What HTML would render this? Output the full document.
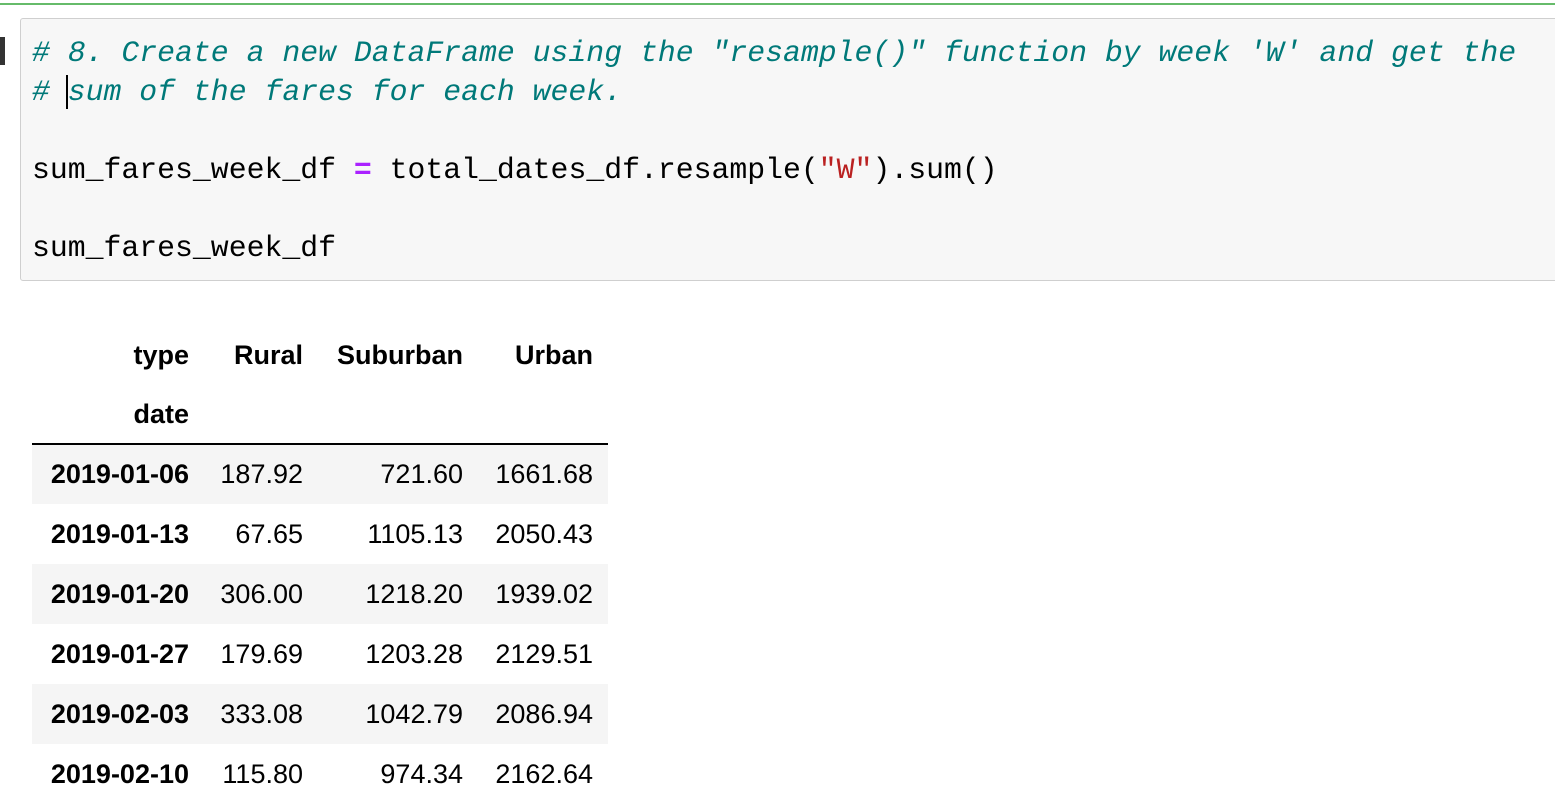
<!DOCTYPE html>
<html><head><style>
body{margin:0;width:1555px;height:798px;overflow:hidden;background:#fff;position:relative;font-family:"Liberation Sans",Arial,sans-serif}
.green{position:absolute;left:0;top:3px;width:1555px;height:2px;background:#66bb6a}
.mark{position:absolute;left:0;top:37px;width:5px;height:28px;background:#333}
.cell{position:absolute;left:20px;top:18px;width:1545px;height:261px;background:#f7f7f7;border:1px solid #cfcfcf;border-radius:3px}
.code{position:absolute;left:32px;top:34px;font-family:"Liberation Mono",monospace;font-size:29.8px;letter-spacing:0;line-height:39px;white-space:pre;color:#000}
.c{color:#007979;font-style:italic}
.o{color:#aa22ff;font-weight:bold}
.s{color:#ba2121}
.cur{position:absolute;left:66px;top:75px;width:2px;height:34px;background:#000}
table{position:absolute;left:32px;top:325px;border-collapse:collapse;font-size:27px;color:#000;table-layout:fixed;width:576px}
td,th{height:60px;padding:0 15px 0 0;text-align:right;white-space:nowrap;box-sizing:border-box}
th{font-weight:bold}
thead tr:last-child th{border-bottom:2px solid #000;height:59px}
tbody tr:nth-child(odd){background:#f5f5f5}
</style></head><body>
<div class="green"></div>
<div class="mark"></div>
<div class="cell"></div>
<div class="code"><span class="c"># 8. Create a new DataFrame using the "resample()" function by week 'W' and get the
# sum of the fares for each week.</span>

sum_fares_week_df <span class="o">=</span> total_dates_df.resample(<span class="s">"W"</span>).sum()

sum_fares_week_df</div>
<div class="cur"></div>
<table>
<colgroup><col style="width:172px"><col style="width:114px"><col style="width:160px"><col style="width:130px"></colgroup>
<thead>
<tr><th>type</th><th>Rural</th><th>Suburban</th><th>Urban</th></tr>
<tr><th>date</th><th></th><th></th><th></th></tr>
</thead>
<tbody>
<tr><th>2019-01-06</th><td>187.92</td><td>721.60</td><td>1661.68</td></tr>
<tr><th>2019-01-13</th><td>67.65</td><td>1105.13</td><td>2050.43</td></tr>
<tr><th>2019-01-20</th><td>306.00</td><td>1218.20</td><td>1939.02</td></tr>
<tr><th>2019-01-27</th><td>179.69</td><td>1203.28</td><td>2129.51</td></tr>
<tr><th>2019-02-03</th><td>333.08</td><td>1042.79</td><td>2086.94</td></tr>
<tr><th>2019-02-10</th><td>115.80</td><td>974.34</td><td>2162.64</td></tr>
</tbody>
</table>
</body></html>
